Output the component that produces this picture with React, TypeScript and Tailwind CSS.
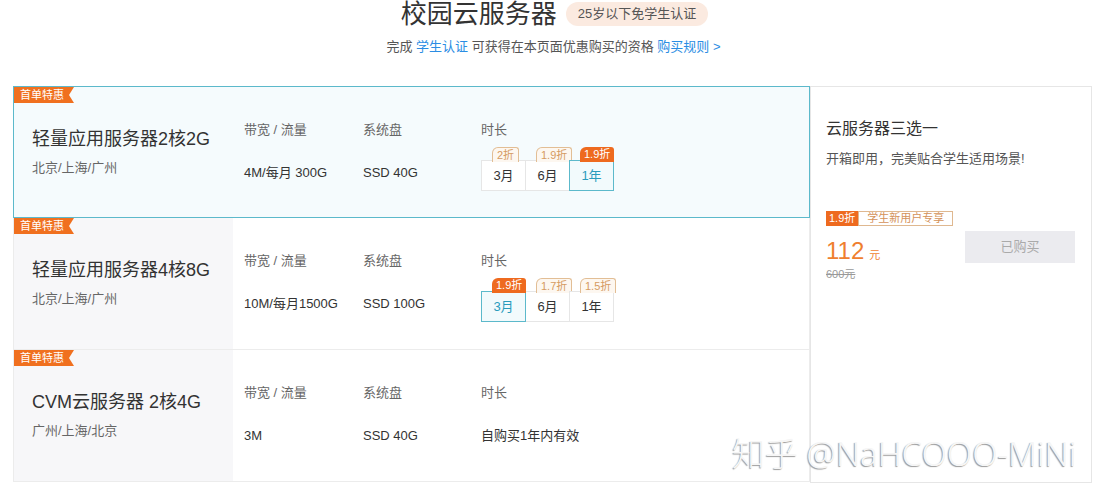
import React from "react";

const FONT = "font-['Liberation_Sans','Noto_Sans_CJK_SC',sans-serif]";

type Opt = { label: string; tag: string };
type Row = {
  name: string;
  loc: string;
  bw: string;
  disk: string;
  opts?: Opt[];
  sel?: number;
  text?: string;
  active?: boolean;
};

const rows: Row[] = [
  {
    name: "轻量应用服务器2核2G",
    loc: "北京/上海/广州",
    bw: "4M/每月 300G",
    disk: "SSD 40G",
    opts: [
      { label: "3月", tag: "2折" },
      { label: "6月", tag: "1.9折" },
      { label: "1年", tag: "1.9折" },
    ],
    sel: 2,
    active: true,
  },
  {
    name: "轻量应用服务器4核8G",
    loc: "北京/上海/广州",
    bw: "10M/每月1500G",
    disk: "SSD 100G",
    opts: [
      { label: "3月", tag: "1.9折" },
      { label: "6月", tag: "1.7折" },
      { label: "1年", tag: "1.5折" },
    ],
    sel: 0,
  },
  {
    name: "CVM云服务器 2核4G",
    loc: "广州/上海/北京",
    bw: "3M",
    disk: "SSD 40G",
    text: "自购买1年内有效",
  },
];

function Badge() {
  return (
    <div className="absolute left-0 top-0 h-[16px] w-[60px] whitespace-nowrap bg-[#f0701f] pl-[6px] text-[11px] leading-[16px] text-white [clip-path:polygon(0_0,100%_0,calc(100%-5px)_50%,100%_100%,0_100%)]">
      首单特惠
    </div>
  );
}

function Col({ label, children, w }: { label: string; children: React.ReactNode; w: string }) {
  return (
    <div className={`${w} flex flex-col`}>
      <div className="mt-[33px] text-[13px] leading-[20px] text-[#666]">{label}</div>
      {children}
    </div>
  );
}

function RowView({ r }: { r: Row }) {
  const border = r.active
    ? "border border-[#5cb9cb] bg-[#f5fbfd] z-10"
    : "border-x border-b border-[#ececec] bg-white";
  return (
    <div className={`relative flex h-[132px] ${border}`}>
      <div className={`flex w-[219px] flex-col pl-[18px] ${r.active ? "" : "bg-[#f7f7f9]"}`}>
        <div className="mt-[39px] whitespace-nowrap text-[18px] leading-[26px] text-[#333]">{r.name}</div>
        <div className="mt-[6px] text-[13px] leading-[20px] text-[#666]">{r.loc}</div>
      </div>
      <div className="flex pl-[11px]">
        <Col label="带宽 / 流量" w="w-[119px]">
          <div className="mt-[23px] whitespace-nowrap text-[13px] leading-[20px] text-[#333]">{r.bw}</div>
        </Col>
        <Col label="系统盘" w="w-[118px]">
          <div className="mt-[23px] text-[13px] leading-[20px] text-[#333]">{r.disk}</div>
        </Col>
        <Col label="时长" w="w-[200px]">
          {r.opts ? (
            <div className="ml-px mt-[20px] flex">
              {r.opts.map((o, k) => {
                const s = k === r.sel;
                return (
                  <div
                    key={k}
                    className={`relative -ml-px flex h-[31px] w-[45px] items-center justify-center border text-[13px] ${
                      s
                        ? "z-10 border-[#5cb9cb] bg-[#f2fafc] text-[#2a9cbc]"
                        : "border-[#e6e6e6] bg-white text-[#333]"
                    }`}
                  >
                    {o.label}
                    <div
                      className={`absolute -top-[14px] left-[10px] h-[15px] whitespace-nowrap rounded-tl-[6px] rounded-tr-[3px] px-[4px] text-[11px] leading-[14px] ${
                        s
                          ? "bg-[#ee6a1f] text-white"
                          : "border border-b-0 border-[#e2be95] bg-[#fdf7f0] text-[#d59b62]"
                      }`}
                    >
                      {o.tag}
                    </div>
                  </div>
                );
              })}
            </div>
          ) : (
            <div className="mt-[23px] text-[13px] leading-[20px] text-[#333]">{r.text}</div>
          )}
        </Col>
      </div>
      <Badge />
    </div>
  );
}

export default function App() {
  return (
    <div className={`relative h-[500px] w-full overflow-hidden bg-white ${FONT}`}>
      <div className="-mt-[1px] flex h-[30px] items-center justify-center gap-[9px] pl-[2px]">
        <div className="text-[26px] leading-[30px] text-[#333]">校园云服务器</div>
        <div className="flex h-[24px] items-center rounded-full bg-[#fbeae0] px-[12px] text-[13px] text-[#555]">
          25岁以下免学生认证
        </div>
      </div>
      <div className="mt-[8px] text-center text-[13px] leading-[20px] text-[#555]">
        完成 <span className="text-[#2b8de3]">学生认证</span> 可获得在本页面优惠购买的资格{" "}
        <span className="text-[#2b8de3]">购买规则 &gt;</span>
      </div>
      <div className="ml-[13px] mt-[29px] flex w-[1079px]">
        <div className="flex w-[797px] flex-col">
          {rows.map((r, i) => (
            <RowView key={i} r={r} />
          ))}
        </div>
        <div className="flex h-[397px] flex-1 flex-col border border-[#e6e6e6] pl-[15px] pr-[16px]">
          <div className="mt-[30px] text-[16px] leading-[24px] text-[#333]">云服务器三选一</div>
          <div className="mt-[8px] text-[13px] leading-[20px] text-[#555]">开箱即用，完美贴合学生适用场景!</div>
          <div className="mt-[42px] flex justify-between">
            <div className="flex flex-col">
              <div className="flex h-[15px] w-fit whitespace-nowrap text-[11px] leading-[13px]">
                <span className="bg-[#ee6a1f] px-[3px] leading-[15px] text-white">1.9折</span>
                <span className="border border-[#dfb890] px-[8px] text-[#d4925a]">学生新用户专享</span>
              </div>
              <div className="mt-[11px] flex items-baseline leading-[28px] text-[#ef7f2f]">
                <span className="text-[24px]">112</span>
                <span className="ml-[5px] text-[11px]">元</span>
              </div>
              <div className="-mt-[2px] text-[11px] leading-[14px] text-[#999] line-through">600元</div>
            </div>
            <div className="mt-[20px] flex h-[32px] w-[110px] items-center justify-center bg-[#ebebef] text-[13px] text-[#aaa]">
              已购买
            </div>
          </div>
        </div>
      </div>
      <div className="pointer-events-none absolute left-[732px] top-[432px] whitespace-nowrap font-['Noto_Sans','Noto_Sans_CJK_SC',sans-serif] text-[33px] font-light leading-[44px] text-[#f6f6f6] [text-shadow:-1px_1px_1px_#9a9a9a]">
        知乎 @NaHCOOO-MiNi
      </div>
    </div>
  );
}
